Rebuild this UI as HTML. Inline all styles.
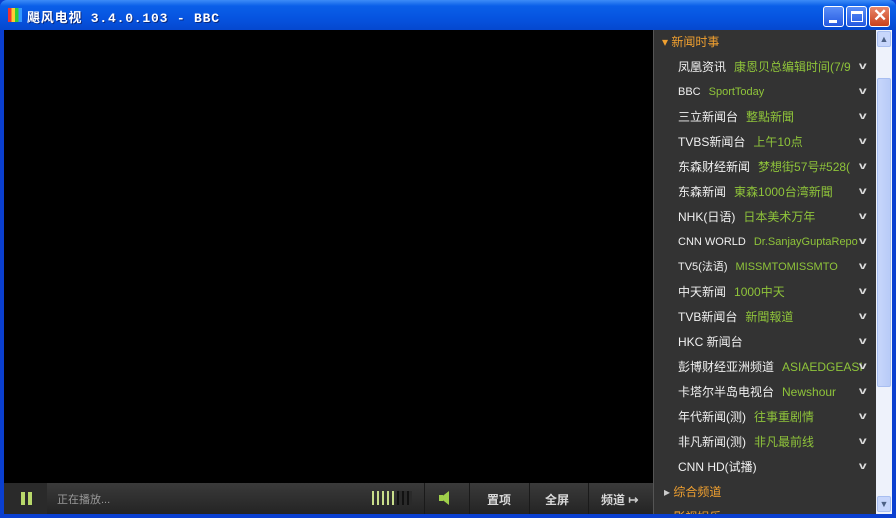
<!DOCTYPE html>
<html><head><meta charset="utf-8"><style>
*{margin:0;padding:0;box-sizing:border-box}
body{width:896px;height:518px;overflow:hidden;background:#0a3fd0;font-family:"Liberation Sans","Noto Sans CJK SC",sans-serif;position:relative}
.title{position:absolute;left:0;top:0;width:896px;height:30px;background:linear-gradient(#3d8cf7 0%,#0a5fe8 20%,#0654e0 60%,#0548cf 100%);border-radius:7px 7px 0 0}
.title .t{position:absolute;left:27px;top:7px;color:#fff;font-size:13px;font-weight:bold;font-family:"Liberation Mono","Noto Sans CJK SC",monospace;text-shadow:1px 1px #0a2a80;letter-spacing:0.8px}
.logo{position:absolute;left:8px;top:8px;width:14px;height:14px;background:linear-gradient(90deg,#e33 0,#e33 25%,#fc3 25%,#fc3 50%,#3c3 50%,#3c3 75%,#39f 75%)}
.btn{position:absolute;top:6px;width:21px;height:21px;border:1px solid #fff;border-radius:3px;background:linear-gradient(#5a8ef8,#2559e0)}
.video{position:absolute;left:4px;top:30px;width:649px;height:453px;background:#000}
.ctrl{position:absolute;left:4px;top:483px;width:649px;height:31px;background:linear-gradient(#3a3a3a,#242424)}
.ctrl span{position:absolute;top:8px;font-size:12px;color:#d8d8d8;font-weight:bold}
.sep{position:absolute;top:0;width:1px;height:31px;background:#1a1a1a}
.panel{position:absolute;left:653px;top:30px;width:223px;height:484px;background:#333;overflow:hidden;border-left:1px solid #555}
.row{position:absolute;left:0;width:223px;height:25px;font-size:12px;line-height:25px}
.row .n{position:absolute;left:24px;color:#f0f0f0}
.row .p{color:#8fc43a;margin-left:8px}
.row .c{position:absolute;right:11px;top:-1px;color:#ddd;font-size:10px;font-weight:bold;transform:scaleX(1.4)}
.hd{color:#f0a030;font-size:12px}
.sb{position:absolute;left:876px;top:30px;width:16px;height:484px;background:#eef2fb}
.thumb{position:absolute;left:1px;top:48px;width:14px;height:309px;background:linear-gradient(90deg,#c7d6fb,#b8cbf7);border:1px solid #a8bef0;border-radius:2px}
</style></head><body>
<div class="title"><div class="logo"></div><div class="t">飓风电视 3.4.0.103 - BBC</div>
<div class="btn" style="left:823px"><div style="position:absolute;left:5px;top:13px;width:8px;height:3px;background:#fff"></div></div>
<div class="btn" style="left:846px"><div style="position:absolute;left:4px;top:4px;width:12px;height:11px;border:1px solid #fff;border-top:3px solid #fff"></div></div>
<div class="btn" style="left:869px;background:linear-gradient(#e9876a,#c8401c)"><div style="position:absolute;left:3px;top:-1px;color:#fff;font-size:17px;font-weight:bold">✕</div></div>
</div>
<div class="video"></div>
<div class="ctrl">
<div style="position:absolute;left:0;top:0;width:43px;height:31px;background:#2a2a2a"></div>
<div style="position:absolute;left:17px;top:9px;width:4px;height:13px;background:#b8d86a"></div>
<div style="position:absolute;left:24px;top:9px;width:4px;height:13px;background:#b8d86a"></div>
<span style="left:53px;top:8px;font-weight:normal;font-size:11px;color:#999">正在播放...</span>
<div style="position:absolute;left:368px;top:8px;width:40px;height:14px;background:repeating-linear-gradient(90deg,#c9de8a 0,#c9de8a 2px,transparent 2px,transparent 5px)"></div>
<div style="position:absolute;left:393px;top:8px;width:15px;height:14px;background:repeating-linear-gradient(90deg,#111 0,#111 2px,#2a2a2a 2px,#2a2a2a 5px)"></div>
<div class="sep" style="left:420px"></div>
<div style="position:absolute;left:435px;top:12px;width:4px;height:6px;background:#9fd04a"></div>
<div style="position:absolute;left:436px;top:8px;width:0;height:0;border-right:9px solid #9fd04a;border-top:7px solid transparent;border-bottom:7px solid transparent"></div>
<div class="sep" style="left:465px"></div>
<span style="left:483px">置项</span>
<div class="sep" style="left:525px"></div>
<span style="left:541px">全屏</span>
<div class="sep" style="left:584px"></div>
<span style="left:597px">频道 <b style="color:#ccc">↦</b></span>
</div>
<div class="panel">
<div class="row" style="top:0"><span class="hd" style="position:absolute;left:8px">▾ 新闻时事</span></div>
<div class="row" style="top:25px"><span class="n">凤凰资讯<span class="p">康恩贝总编辑时间(7/9</span></span><span class="c">v</span></div>
<div class="row" style="top:50px"><span class="n" style="font-size:11px">BBC<span class="p">SportToday</span></span><span class="c">v</span></div>
<div class="row" style="top:75px"><span class="n">三立新闻台<span class="p">整點新聞</span></span><span class="c">v</span></div>
<div class="row" style="top:100px"><span class="n">TVBS新闻台<span class="p">上午10点</span></span><span class="c">v</span></div>
<div class="row" style="top:125px"><span class="n">东森财经新闻<span class="p">梦想街57号#528(</span></span><span class="c">v</span></div>
<div class="row" style="top:150px"><span class="n">东森新闻<span class="p">東森1000台湾新聞</span></span><span class="c">v</span></div>
<div class="row" style="top:175px"><span class="n">NHK(日语)<span class="p">日本美术万年</span></span><span class="c">v</span></div>
<div class="row" style="top:200px"><span class="n" style="font-size:11px">CNN WORLD<span class="p">Dr.SanjayGuptaRepo</span></span><span class="c">v</span></div>
<div class="row" style="top:225px"><span class="n" style="font-size:11px">TV5(法语)<span class="p">MISSMTOMISSMTO</span></span><span class="c">v</span></div>
<div class="row" style="top:250px"><span class="n">中天新闻<span class="p">1000中天</span></span><span class="c">v</span></div>
<div class="row" style="top:275px"><span class="n">TVB新闻台<span class="p">新聞報道</span></span><span class="c">v</span></div>
<div class="row" style="top:300px"><span class="n">HKC 新闻台</span><span class="c">v</span></div>
<div class="row" style="top:325px"><span class="n">彭博财经亚洲频道<span class="p">ASIAEDGEASI</span></span><span class="c">v</span></div>
<div class="row" style="top:350px"><span class="n">卡塔尔半岛电视台<span class="p">Newshour</span></span><span class="c">v</span></div>
<div class="row" style="top:375px"><span class="n">年代新闻(测)<span class="p">往事重剧情</span></span><span class="c">v</span></div>
<div class="row" style="top:400px"><span class="n">非凡新闻(测)<span class="p">非凡最前线</span></span><span class="c">v</span></div>
<div class="row" style="top:425px"><span class="n">CNN HD(试播)</span><span class="c">v</span></div>
<div class="row" style="top:450px"><span class="hd" style="position:absolute;left:10px"><span style="color:#ccc">▸</span> 综合频道</span></div>
<div class="row" style="top:475px"><span class="hd" style="position:absolute;left:10px"><span style="color:#ccc">▸</span> 影视娱乐</span></div>
</div>
<div class="sb">
<div style="position:absolute;left:1px;top:1px;width:14px;height:16px;background:#c7d6fb;border:1px solid #a8bef0;border-radius:2px;color:#4d6185;font-size:9px;text-align:center;line-height:14px">▲</div>
<div class="thumb"></div>
<div style="position:absolute;left:1px;top:466px;width:14px;height:16px;background:#c7d6fb;border:1px solid #a8bef0;border-radius:2px;color:#4d6185;font-size:9px;text-align:center;line-height:14px">▼</div>
</div>
</body></html>
